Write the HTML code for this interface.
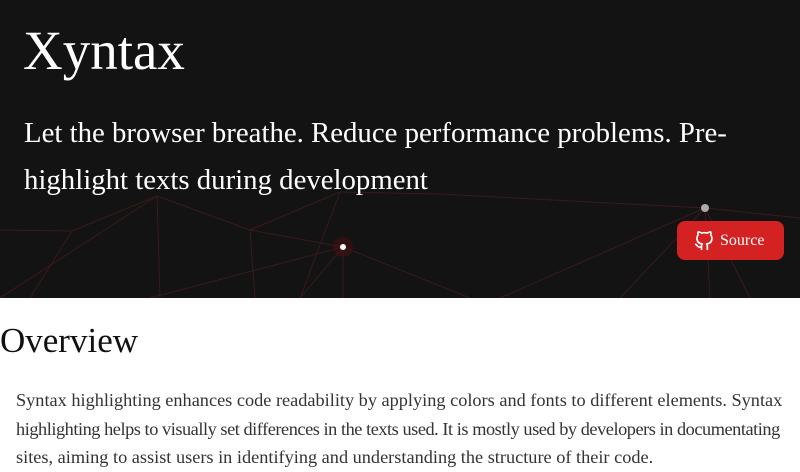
<!DOCTYPE html>
<html><head><style>
*{margin:0;padding:0;box-sizing:border-box}
body{width:800px;height:472px;overflow:hidden;background:#fff;font-family:"Liberation Serif",serif;color:#222}
header{position:relative;height:298px;background:#131313;overflow:hidden}
header svg{position:absolute;left:0;top:0}
h1{position:absolute;left:23px;top:20px;font-size:55px;font-weight:normal;color:#fff;line-height:62px}
.sub{position:absolute;left:24px;top:110px;width:750px;font-size:28.8px;line-height:47px;color:#fff}
.btn{position:absolute;left:677px;top:221px;width:107px;height:39px;background:#d42222;border-radius:8px;color:#fff;font-size:16px;display:flex;align-items:center;padding-left:17px}
.btn svg{position:static;margin-right:6px}
h2{position:absolute;left:0;top:321px;font-size:35px;font-weight:normal;color:#111}
p{position:absolute;left:16px;top:386px;width:784px;font-size:18.3px;line-height:28.6px;color:#333;white-space:nowrap}
p span{display:block}
</style></head><body>
<header>
<svg width="800" height="298" stroke="#5a2020" stroke-width="1" fill="none" opacity="0.55">
<line x1="157" y1="196" x2="0" y2="298"/><line x1="157" y1="196" x2="72" y2="231"/><line x1="157" y1="196" x2="250" y2="230"/>
<line x1="157" y1="196" x2="160" y2="298"/><line x1="343" y1="247" x2="150" y2="298"/><line x1="343" y1="247" x2="300" y2="298"/>
<line x1="343" y1="247" x2="343" y2="298"/><line x1="343" y1="247" x2="470" y2="298"/><line x1="343" y1="247" x2="250" y2="230"/>
<line x1="250" y1="230" x2="340" y2="192"/><line x1="340" y1="192" x2="440" y2="194"/><line x1="440" y1="194" x2="705" y2="208"/>
<line x1="705" y1="208" x2="800" y2="218"/><line x1="705" y1="208" x2="500" y2="298"/><line x1="705" y1="208" x2="620" y2="298"/>
<line x1="705" y1="208" x2="710" y2="298"/><line x1="705" y1="208" x2="750" y2="298"/><line x1="340" y1="192" x2="300" y2="298"/>
<line x1="72" y1="231" x2="0" y2="230"/><line x1="72" y1="231" x2="30" y2="298"/><line x1="250" y1="230" x2="255" y2="298"/>
</svg>
<svg width="800" height="298">
<circle cx="343" cy="247" r="10" fill="#5a1010" opacity="0.4"/>
<circle cx="343" cy="247" r="3" fill="#fff"/>
<circle cx="705" cy="208" r="4" fill="#b0a8a8"/>
</svg>
<h1>Xyntax</h1>
<div class="sub">Let the browser breathe. Reduce performance problems. Pre-highlight texts during development</div>
<div class="btn"><svg width="20" height="22" viewBox="0 0 24 24" fill="none" stroke="#fff" stroke-width="2" stroke-linecap="round" stroke-linejoin="round"><path d="M9 19c-5 1.5-5-2.5-7-3m14 6v-3.9a3.4 3.4 0 0 0-.9-2.6c3.1-.3 6.4-1.5 6.4-7A5.4 5.4 0 0 0 20 4.8 5 5 0 0 0 19.9 1S18.7.7 16 2.5a13.4 13.4 0 0 0-7 0C6.3.7 5.1 1 5.1 1A5 5 0 0 0 5 4.8a5.4 5.4 0 0 0-1.5 3.7c0 5.4 3.3 6.6 6.4 7a3.4 3.4 0 0 0-.9 2.6V22"/></svg>Source</div>
</header>
<h2>Overview</h2>
<p><span>Syntax highlighting enhances code readability by applying colors and fonts to different elements. Syntax</span> <span style="letter-spacing:-0.45px">highlighting helps to visually set differences in the texts used. It is mostly used by developers in documentating</span> <span>sites, aiming to assist users in identifying and understanding the structure of their code.</span></p>
</body></html>
